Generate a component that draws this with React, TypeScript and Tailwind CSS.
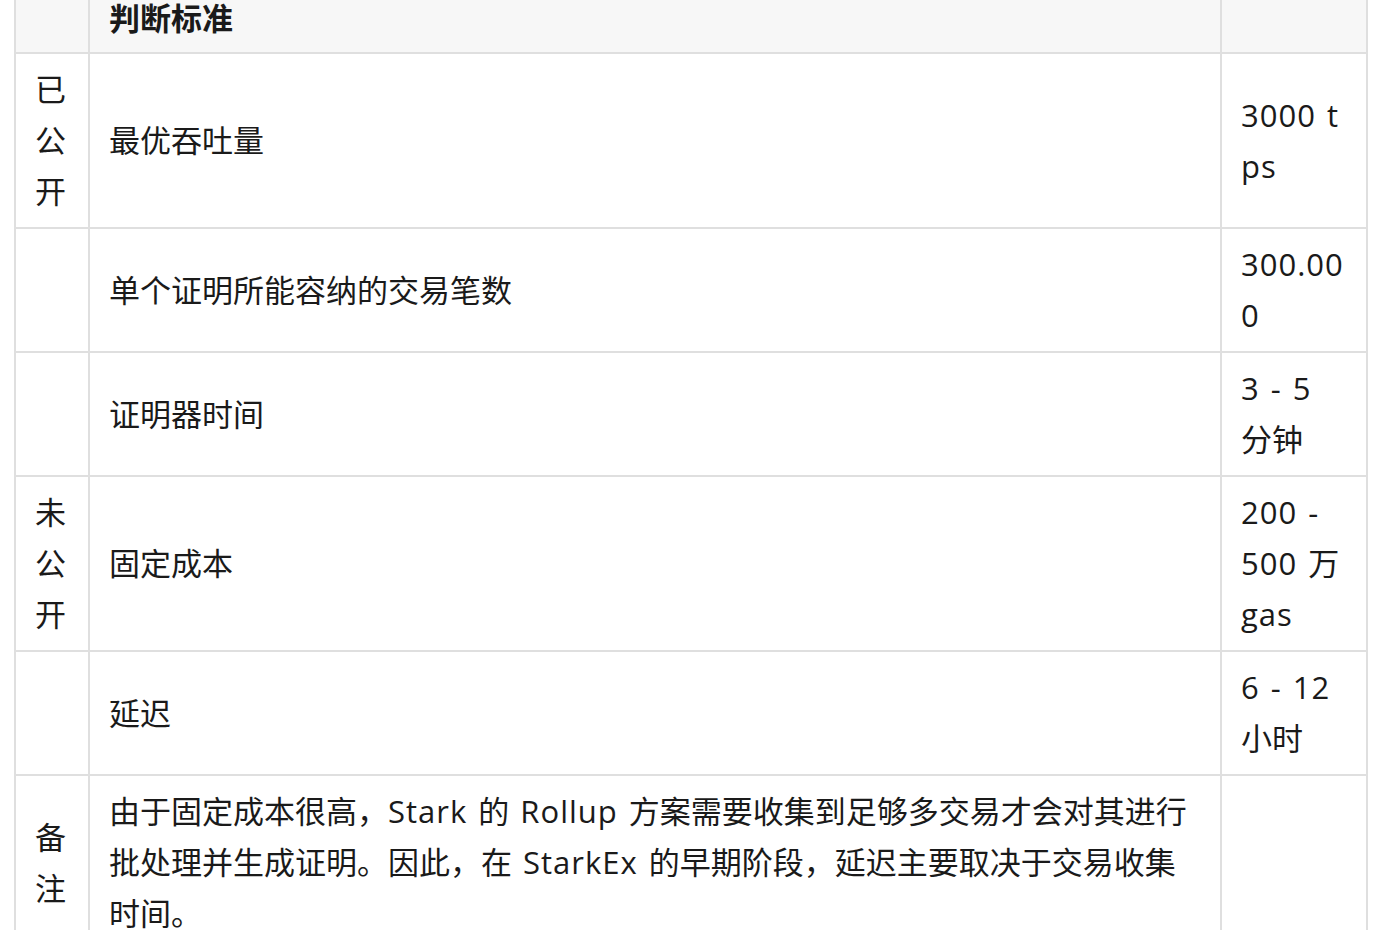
import React from "react";

type Row = {
  group: string[];
  name: string[];
  value: string[];
};

const rows: Row[] = [
  { group: ["已", "公", "开"], name: ["最优吞吐量"], value: ["3000 t", "ps"] },
  { group: [], name: ["单个证明所能容纳的交易笔数"], value: ["300.00", "0"] },
  { group: [], name: ["证明器时间"], value: ["3 - 5", "分钟"] },
  { group: ["未", "公", "开"], name: ["固定成本"], value: ["200 -", "500 万", "gas"] },
  { group: [], name: ["延迟"], value: ["6 - 12", "小时"] },
  {
    group: ["备", "注"],
    name: [
      "由于固定成本很高，Stark 的 Rollup 方案需要收集到足够多交易才会对其进行",
      "批处理并生成证明。因此，在 StarkEx 的早期阶段，延迟主要取决于交易收集",
      "时间。",
    ],
    value: [],
  },
];

const cell = "border-2 border-[#dfdfdf] px-[19px] py-[10px] align-middle";

// latin runs are a touch wider in the original
const Text = ({ text }: { text: string }) => (
  <>
    {text.split(/([\x20-\x7e]+)/).map((part, i) =>
      /[\x20-\x7e]/.test(part) ? (
        <span key={i} className="tracking-[1px] [word-spacing:2px]">{part}</span>
      ) : (
        <React.Fragment key={i}>{part}</React.Fragment>
      )
    )}
  </>
);

const Lines = ({ lines }: { lines: string[] }) => (
  <>
    {lines.map((l, i) => (
      <div key={i} className="whitespace-nowrap"><Text text={l} /></div>
    ))}
  </>
);

export default function App() {
  return (
    <div
      className="bg-white min-h-screen pl-[14px] -mt-[21px] text-[31px] leading-[51px] text-[#1a1a1a]"
      style={{ fontFamily: '"Open Sans", "Noto Sans CJK SC", sans-serif' }}
    >
      <table className="table-fixed border-collapse w-[1352px]">
        <colgroup>
          <col className="w-[74px]" />
          <col className="w-[1132px]" />
          <col className="w-[146px]" />
        </colgroup>
        <thead>
          <tr className="bg-[#f7f7f7]">
            <th className={cell}></th>
            <th className="border-2 border-[#dfdfdf] px-[19px] pt-[12px] pb-[8px] align-middle text-left font-bold">判断标准</th>
            <th className={cell}></th>
          </tr>
        </thead>
        <tbody>
          {rows.map((r, i) => (
            <tr key={i}>
              <td className={cell}><Lines lines={r.group} /></td>
              <td className={cell}><Lines lines={r.name} /></td>
              <td className={cell}><Lines lines={r.value} /></td>
            </tr>
          ))}
        </tbody>
      </table>
    </div>
  );
}
